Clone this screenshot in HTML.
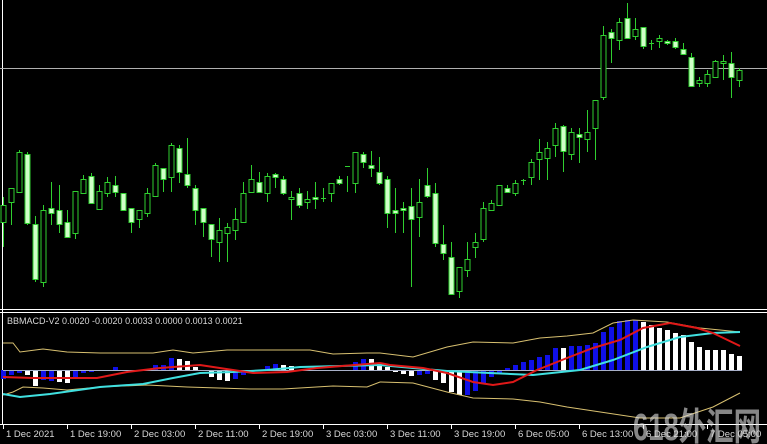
<!DOCTYPE html>
<html><head><meta charset="utf-8"><style>
html,body{margin:0;padding:0;background:#000;width:767px;height:444px;overflow:hidden}
svg{display:block}
text{font-family:"Liberation Sans",sans-serif}
</style></head><body>
<svg id="s" width="767" height="444" xmlns="http://www.w3.org/2000/svg">
<rect width="767" height="444" fill="#000"/>
<line x1="2.5" y1="0" x2="2.5" y2="425" stroke="#fff" stroke-width="1"/>
<line x1="0" y1="68.5" x2="767" y2="68.5" stroke="#b0b0b0" stroke-width="1"/>
<line x1="0" y1="309.5" x2="767" y2="309.5" stroke="#fff"/>
<line x1="0" y1="312.5" x2="767" y2="312.5" stroke="#fff"/>
<line x1="0" y1="424.5" x2="767" y2="424.5" stroke="#fff"/>
<g id="c"></g>
<g id="h"></g>
<line x1="3" y1="370.5" x2="742" y2="370.5" stroke="#a8b0c8" stroke-width="1"/>
<polyline fill="none" stroke="#d8c070" stroke-width="1" points="3,343 13,343 20,352 43,349 67,352 100,353 153,353 173,350 193,353 227,350 310,350 333,354 367,353 380,353 413,357 447,347 473,342 513,343 540,338 567,336 593,333 613,323 633,320 667,322 700,328 740,332"/>
<polyline fill="none" stroke="#d8c070" stroke-width="1" points="3,395 13,392 23,387 43,388 67,390 100,387 147,385 187,387 250,389 283,389 333,386 367,387 380,382 413,383 447,392 473,398 513,399 540,402 567,407 607,413 640,418 680,418 713,407 740,393"/>
<polyline fill="none" stroke="#40e0e0" stroke-width="2" points="3,394 20,397 50,394 100,387 143,384 173,378 200,373 233,372 267,370 300,367 380,365 413,368 447,371 490,373 533,375 580,370 613,360 647,347 680,337 713,333 740,332"/>
<polyline fill="none" stroke="#e01818" stroke-width="2" points="3,377 33,378 97,378 127,372 160,368 200,365 233,370 253,373 287,372 317,368 380,363 390,365 423,368 447,373 473,382 493,385 513,382 537,370 567,358 593,348 620,340 643,328 670,323 697,328 713,333 740,346"/>
<text x="7" y="324" font-size="9" fill="#d8d8d8">BBMACD-V2 0.0020 -0.0020 0.0033 0.0000 0.0013 0.0021</text>
<g id="ax" font-size="9.5" fill="#d8d8d8"></g>
<text x="633" y="440" font-size="38" font-weight="bold" fill="#e0e0e0" fill-opacity="0.6" style='font-family:"Liberation Sans","Noto Sans CJK SC",sans-serif' textLength="128" lengthAdjust="spacingAndGlyphs">618外汇网</text>
</svg>
<script>
var NS="http://www.w3.org/2000/svg";
function el(p,t,a){var e=document.createElementNS(NS,t);for(var k in a)e.setAttribute(k,a[k]);p.appendChild(e);return e;}
var C=[[197,205,222,247,0],[188,188,202,225,0],[150,152,192,193,0],[152,154,223,225,1],[216,224,279,282,1],[205,210,282,287,0],[182,208,213,225,1],[185,210,224,233,1],[210,222,237,237,1],[191,191,233,239,0],[175,179,193,193,0],[173,176,203,203,1],[185,191,209,210,0],[177,182,193,197,0],[176,185,192,197,1],[193,193,210,210,1],[208,208,222,233,1],[210,210,219,228,0],[188,193,213,217,0],[163,165,196,196,0],[168,168,179,192,1],[143,145,177,192,0],[145,148,172,183,1],[138,174,185,188,1],[185,188,210,225,1],[208,208,222,237,1],[224,224,239,257,1],[218,230,242,262,0],[223,227,233,262,0],[208,219,230,240,0],[182,193,222,223,0],[165,179,192,193,0],[172,182,192,193,1],[173,176,193,202,0],[173,174,177,188,1],[176,179,193,195,1],[191,197,199,220,0],[188,193,205,208,1],[191,199,202,209,0],[182,197,199,209,1],[188,198,199,202,0],[183,183,193,202,0],[176,179,183,185,1],[176,166,167,192,0],[152,152,183,193,0],[152,154,162,168,1],[151,165,168,177,1],[157,172,183,185,1],[176,179,213,228,1],[188,210,213,233,1],[202,208,210,233,1],[188,206,219,287,1],[179,202,217,237,0],[168,185,196,198,1],[183,193,243,247,1],[225,244,253,260,1],[242,257,294,295,1],[267,267,291,298,0],[242,259,270,277,0],[233,242,247,258,0],[202,208,239,242,0],[200,203,210,210,0],[185,185,205,205,0],[185,188,192,193,1],[180,183,193,196,0],[179,180,181,185,0],[159,162,177,185,0],[139,152,159,180,0],[142,148,158,180,0],[123,128,145,157,0],[125,126,151,172,1],[128,132,154,160,0],[128,134,137,163,1],[110,132,139,152,0],[100,100,128,160,0],[26,35,97,100,0],[29,32,38,63,1],[18,22,40,50,0],[3,18,38,38,1],[18,29,36,40,0],[27,27,46,49,1],[40,43,44,50,0],[35,38,41,48,0],[40,41,43,45,1],[38,41,47,49,1],[43,49,54,55,1],[53,57,86,87,1],[77,80,83,87,0],[70,74,83,87,0],[60,61,77,78,0],[55,61,63,80,0],[52,63,77,98,1],[68,70,80,87,0]];
var g=document.getElementById("c");
C.forEach(function(c,i){var x=3+8*i;
el(g,"line",{x1:x+.5,x2:x+.5,y1:c[0],y2:c[3],stroke:"#2fcf2f","stroke-width":1});
var h=Math.max(c[2]-c[1],1);
if(h<=1){el(g,"line",{x1:x-2,x2:x+3,y1:c[1]+.5,y2:c[1]+.5,stroke:"#2fcf2f"});}
else el(g,"rect",{x:x-2,y:c[1]+.5,width:5,height:h,fill:c[4]?"#d0ffc8":"#000",stroke:"#2fcf2f","stroke-width":1});
});
var H=[[3,379,0],[11,375,0],[19,373,0],[27,375,1],[35,386,1],[43,380,0],[51,381,0],[59,382,1],[67,383,1],[75,378,0],[83,373,0],[91,372,0],[115,367,0],[155,365,0],[163,365,0],[171,358,0],[179,359,1],[187,361,1],[195,367,1],[211,377,1],[219,380,1],[227,381,1],[235,379,0],[243,375,0],[267,366,0],[275,364,0],[283,365,1],[291,366,1],[355,362,0],[363,359,0],[371,359,1],[379,364,1],[387,367,1],[395,372,1],[403,374,1],[411,376,1],[419,375,0],[427,374,0],[435,380,1],[443,383,1],[451,392,1],[459,395,1],[467,395,0],[475,391,0],[483,383,0],[491,377,0],[499,373,0],[507,368,0],[515,365,0],[523,362,0],[531,360,0],[539,357,0],[547,355,0],[555,348,0],[563,348,1],[571,346,0],[579,346,0],[587,345,0],[595,343,0],[603,332,0],[611,327,0],[619,321,0],[627,320,0],[635,320,0],[643,322,1],[651,325,1],[659,328,1],[667,330,1],[675,333,1],[683,335,1],[691,342,1],[699,347,1],[707,350,1],[715,350,1],[723,350,1],[731,354,1],[739,356,1]];
var hg=document.getElementById("h");
H.forEach(function(b){var y0=Math.min(b[1],370),y1=Math.max(b[1],371);
el(hg,"rect",{x:b[0]-2,y:y0,width:5,height:y1-y0,fill:b[2]?"#ffffff":"#1010e8"});});
var L=["1 Dec 2021","1 Dec 19:00","2 Dec 03:00","2 Dec 11:00","2 Dec 19:00","3 Dec 03:00","3 Dec 11:00","3 Dec 19:00","6 Dec 05:00","6 Dec 13:00","6 Dec 21:00","7 Dec 05:00"];
var ax=document.getElementById("ax");
L.forEach(function(t,i){var x=3+64*i;
el(ax,"line",{x1:x+.5,x2:x+.5,y1:425,y2:429,stroke:"#fff"});
var e=el(ax,"text",{x:x+3,y:437});e.textContent=t;});
</script>
</body></html>
